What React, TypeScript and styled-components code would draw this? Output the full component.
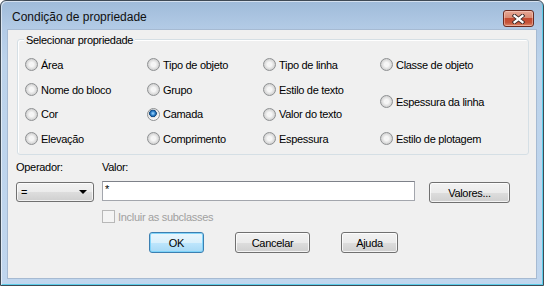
import React from "react";
import styled, { createGlobalStyle } from "styled-components";

const GlobalStyle = createGlobalStyle`
  html, body {
    margin: 0;
    padding: 0;
    background: #ffffff;
  }
  body {
    font-family: "Liberation Sans", Arial, sans-serif;
    font-size: 11px;
    letter-spacing: -0.3px;
    color: #000;
  }
`;

const Window = styled.div`
  width: 544px;
  height: 286px;
  box-sizing: border-box;
  border: 1px solid #3f4a55;
  border-radius: 6px 6px 0 0;
  background: linear-gradient(#9fbbd9 0px, #b3cbe6 28px, #bcd3eb 60px, #c0d6ee 100%);
  box-shadow: inset 1px 1px 0 rgba(255, 255, 255, 0.55), inset -1px -1px 0 #5ccde9;
  display: flex;
  flex-direction: column;
  overflow: hidden;
`;

const TitleBar = styled.div`
  height: 29px;
  display: flex;
  align-items: flex-start;
  justify-content: space-between;
  padding: 0 9px 0 11px;
  flex-shrink: 0;
`;

const Title = styled.div`
  margin-top: 9px;
  font-size: 12px;
  line-height: 14px;
  letter-spacing: 0;
  color: #101010;
`;

const CloseButton = styled.div`
  margin-top: 9px;
  width: 31px;
  height: 17px;
  box-sizing: border-box;
  border: 1px solid #6a2a20;
  border-radius: 3px;
  background: linear-gradient(#e7a896 0%, #d98b74 44%, #c44a30 50%, #c5543a 78%, #dd8a6a 100%);
  box-shadow: inset 0 0 0 1px rgba(255, 220, 210, 0.45);
  display: flex;
  align-items: center;
  justify-content: center;
`;

const Client = styled.div`
  margin: 0 7px;
  height: 248px;
  flex-shrink: 0;
  background: #f0f0f0;
  box-shadow: 0 0 0 1px #a6bad2;
  display: flex;
  flex-direction: column;
  padding-top: 9px;
  box-sizing: border-box;
`;

const Group = styled.div`
  position: relative;
  margin-left: 9px;
  width: 512px;
  height: 116px;
  box-sizing: border-box;
  border: 1px solid #d5dfe5;
  border-radius: 3px;
  box-shadow: inset 1px 1px 0 #ffffff;
  padding: 12.67px 0 0 7px;
`;

const Legend = styled.span`
  position: absolute;
  top: -7px;
  left: 6px;
  padding: 0 2px;
  line-height: 14px;
  background: #f0f0f0;
`;

const RadioGrid = styled.div`
  display: grid;
  grid-template-columns: 122px 116px 117px 1fr;
  grid-template-rows: repeat(4, 24.67px);
`;

const Option = styled.label<{ $col: number; $row: string }>`
  display: flex;
  align-items: center;
  gap: 3px;
  line-height: 14px;
  grid-column: ${(p) => p.$col};
  grid-row: ${(p) => p.$row};
`;

const RadioCircle = styled.span<{ $checked?: boolean }>`
  width: 13px;
  height: 13px;
  box-sizing: border-box;
  border-radius: 50%;
  border: 1px solid #8e9092;
  flex-shrink: 0;
  background: ${(p) =>
    p.$checked
      ? "radial-gradient(circle at 45% 40%, #a8dcff 0px, #3d8fd6 1.8px, #12508f 3.2px, #1b4e80 3.6px, #dcdcdc 4px, #f7f7f7 5.5px)"
      : "radial-gradient(circle at 50% 50%, #f4f4f4 0px, #f7f7f7 2px, #e2e2e2 4px, #d2d2d2 5.5px)"};
`;

const FormGrid = styled.div`
  display: grid;
  grid-template-columns: 86px 327px auto;
  grid-template-rows: 14px 22px;
  row-gap: 7px;
  margin-top: 5px;
  padding-left: 8px;
  align-items: start;
`;

const FieldLabel = styled.div`
  line-height: 14px;
`;

const Select = styled.div`
  margin-top: 1px;
  width: 78px;
  height: 20px;
  box-sizing: border-box;
  border: 1px solid #707070;
  border-radius: 3px;
  background: linear-gradient(#f2f2f2 0%, #ebebeb 50%, #dddddd 51%, #cfcfcf 100%);
  box-shadow: inset 0 0 0 1px rgba(255, 255, 255, 0.7);
  display: flex;
  align-items: center;
  justify-content: space-between;
  padding: 0 6px 0 4px;
`;

const Arrow = styled.span`
  width: 0;
  height: 0;
  border-left: 4px solid transparent;
  border-right: 4px solid transparent;
  border-top: 4px solid #000;
`;

const TextInput = styled.div`
  width: 313px;
  height: 20px;
  box-sizing: border-box;
  background: #fff;
  border: 1px solid #a3a6ad;
  border-top-color: #7e8189;
  padding: 1px 2px;
  line-height: 12px;
`;

const Button = styled.div<{ $w: number; $default?: boolean; $offset?: number }>`
  width: ${(p) => p.$w}px;
  height: 21px;
  margin-top: ${(p) => p.$offset ?? 0}px;
  box-sizing: border-box;
  border: 1px solid ${(p) => (p.$default ? "#3c7fb1" : "#707070")};
  border-radius: 3px;
  background: ${(p) =>
    p.$default
      ? "linear-gradient(#eaf6fd 0%, #d9f0fc 50%, #bee6fd 51%, #a7d9f5 100%)"
      : "linear-gradient(#f2f2f2 0%, #ebebeb 50%, #dddddd 51%, #cfcfcf 100%)"};
  box-shadow: inset 0 0 0 1px
    ${(p) => (p.$default ? "rgba(120, 210, 250, 0.9)" : "rgba(255, 255, 255, 0.75)")};
  display: flex;
  align-items: center;
  justify-content: center;
  line-height: 14px;
`;

const CheckRow = styled.div`
  margin-top: 7px;
  padding-left: 94px;
  display: flex;
  align-items: center;
  gap: 3px;
  height: 13px;
  color: #a0a0a0;
`;

const CheckBox = styled.span`
  width: 13px;
  height: 13px;
  box-sizing: border-box;
  border: 1px solid #b8b8b8;
  background: #f4f4f4;
`;

const ButtonRow = styled.div`
  margin-top: 9px;
  padding-left: 141px;
  display: flex;
  gap: 31px;
`;

type Prop = { label: string; col: number; row: string; checked?: boolean };

const properties: Prop[] = [
  { label: "Área", col: 1, row: "1" },
  { label: "Nome do bloco", col: 1, row: "2" },
  { label: "Cor", col: 1, row: "3" },
  { label: "Elevação", col: 1, row: "4" },
  { label: "Tipo de objeto", col: 2, row: "1" },
  { label: "Grupo", col: 2, row: "2" },
  { label: "Camada", col: 2, row: "3", checked: true },
  { label: "Comprimento", col: 2, row: "4" },
  { label: "Tipo de linha", col: 3, row: "1" },
  { label: "Estilo de texto", col: 3, row: "2" },
  { label: "Valor do texto", col: 3, row: "3" },
  { label: "Espessura", col: 3, row: "4" },
  { label: "Classe de objeto", col: 4, row: "1" },
  { label: "Espessura da linha", col: 4, row: "2 / span 2" },
  { label: "Estilo de plotagem", col: 4, row: "4" },
];

export default function App() {
  return (
    <>
      <GlobalStyle />
      <Window>
        <TitleBar>
          <Title>Condição de propriedade</Title>
          <CloseButton>
            <svg width="13" height="10" viewBox="0 0 13 10">
              <path d="M2.5 1.8 L10.5 8.2 M10.5 1.8 L2.5 8.2" stroke="#3a2a28" strokeWidth="4" strokeLinecap="square" />
              <path d="M2.5 1.8 L10.5 8.2 M10.5 1.8 L2.5 8.2" stroke="#ffffff" strokeWidth="2.2" strokeLinecap="square" />
            </svg>
          </CloseButton>
        </TitleBar>
        <Client>
          <Group>
            <Legend>Selecionar propriedade</Legend>
            <RadioGrid>
              {properties.map((p) => (
                <Option key={p.label} $col={p.col} $row={p.row}>
                  <RadioCircle $checked={p.checked} />
                  {p.label}
                </Option>
              ))}
            </RadioGrid>
          </Group>

          <FormGrid>
            <FieldLabel>Operador:</FieldLabel>
            <FieldLabel>Valor:</FieldLabel>
            <div />
            <Select>
              <span>=</span>
              <Arrow />
            </Select>
            <TextInput>*</TextInput>
            <Button $w={81} $offset={1}>
              Valores...
            </Button>
          </FormGrid>

          <CheckRow>
            <CheckBox />
            Incluir as subclasses
          </CheckRow>

          <ButtonRow>
            <Button $w={55} $default>
              OK
            </Button>
            <Button $w={75}>Cancelar</Button>
            <Button $w={57}>Ajuda</Button>
          </ButtonRow>
        </Client>
      </Window>
    </>
  );
}
